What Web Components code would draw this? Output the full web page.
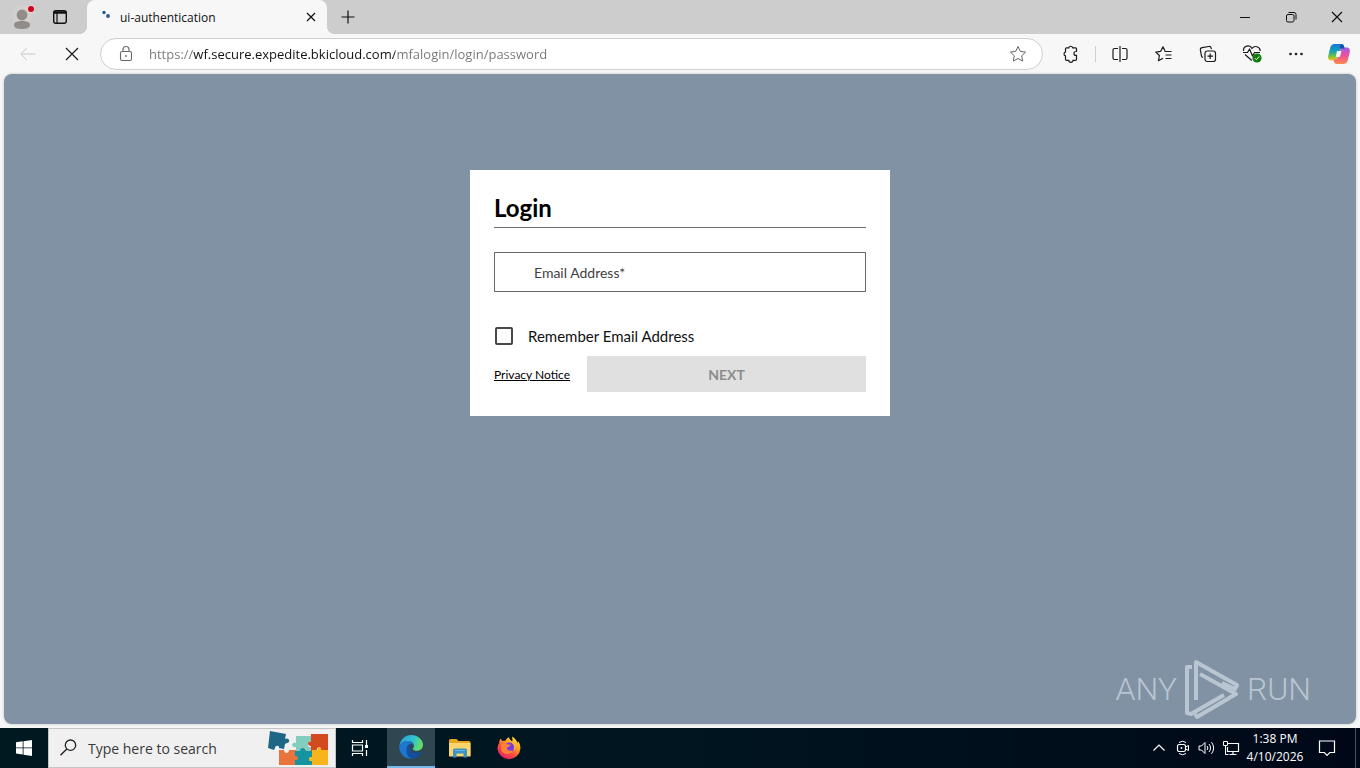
<!DOCTYPE html>
<html lang="en">
<head>
<meta charset="utf-8">
<title>ui-authentication</title>
<style>
html, body { margin: 0; height: 100%; }
body { font-family: "Open Sans", "Noto Sans", sans-serif; color: #1b1b1b; overflow: hidden; }
</style>
</head>
<body>
<desktop-shell></desktop-shell>
<script>
const RESET = `
  *, *::before, *::after { box-sizing: border-box; }
  button { font: inherit; color: inherit; background: none; border: 0; padding: 0; margin: 0; display: flex; align-items: center; justify-content: center; }
  input { font: inherit; color: inherit; margin: 0; }
`;
function define(name, css, html, setup) {
  const template = document.createElement('template');
  template.innerHTML = `<style>${RESET}${css}</style>${html}`;
  customElements.define(name, class extends HTMLElement {
    constructor() {
      super();
      this.attachShadow({ mode: 'open' }).append(template.content.cloneNode(true));
    }
    connectedCallback() { if (setup) setup(this, this.shadowRoot); }
  });
}

/* name: [width, height, markup] */
const line = 'fill="none" stroke="currentColor"';
const ICONS = {
  avatar: [24, 26, `<circle cx="12" cy="11" r="10" fill="#d3d0ce"/><circle cx="12" cy="11" r="5.400" fill="#8f8c89"/><path d="M4 21c0-3 3.500-4 8-4s8 1 8 4-3.500 4-8 4-8-1-8-4z" fill="#8f8c89"/><circle cx="21" cy="5" r="3.800" fill="#e3d6d6"/><circle cx="21" cy="5" r="3" fill="#d0021b"/>`],
  workspace: [16, 16, `<rect x="1.700" y="1.700" width="12.600" height="12.600" rx="2.200" ${line} stroke-width="1.400"/><path d="M1.700 4h12.600M1.700 3h12.600" ${line} stroke-width="1.400"/><path d="M5 4v10.300" ${line} stroke-width="1.200"/>`],
  spinner: [16, 16, `<circle cx="6" cy="3.500" r="1.700" fill="#1f5c96"/><circle cx="10" cy="7" r="1.900" fill="#1f5c96"/>`],
  closeSmall: [10, 10, `<path d="M1 1l8 8M9 1L1 9" ${line} stroke-width="1.200"/>`],
  plus: [14, 14, `<path d="M7 .5v13M.5 7h13" ${line} stroke-width="1.200"/>`],
  minimize: [12, 12, `<path d="M1 6.500h10" ${line}/>`],
  restore: [12, 12, `<rect x="1.500" y="3.500" width="7.500" height="7.500" rx="1.500" ${line}/><path d="M3.500 1.500h5.500a2 2 0 0 1 2 2v5" ${line}/>`],
  close: [12, 12, `<path d="M1 1l10 10M11 1L1 11" ${line} stroke-width="1.200"/>`],
  back: [18, 16, `<path d="M16.500 8H2M8 1.800L1.800 8 8 14.200" ${line}/>`],
  stop: [14, 14, `<path d="M1 1l12 12M13 1L1 13" ${line} stroke-width="1.200"/>`],
  lock: [16, 18, `<rect x="2.500" y="6.500" width="11" height="9" rx="1.800" ${line} stroke-width="1.100"/><path d="M5 6.500V4.500a3 3 0 0 1 6 0v2" ${line} stroke-width="1.100"/><circle cx="8" cy="11" r=".9" fill="currentColor"/>`],
  star: [18, 18, `<path d="M9 1.500l2.300 4.900 5.300.7-3.900 3.700 1 5.300L9 13.500l-4.700 2.600 1-5.300L1.400 7.100l5.300-.7z" ${line} stroke-linejoin="round"/>`],
  puzzle: [18, 18, `<path d="M4.500 2.800h2.300a2 2 0 0 1 3.900 0h2.800a1 1 0 0 1 1 1v2.700h-.6a1.900 1.900 0 0 0 0 3.900h.6v3.900a1 1 0 0 1-1 1H11a2 2 0 0 1-4.200 0H4.500a1 1 0 0 1-1-1v-3.400a2.100 2.100 0 0 1 0-4V3.800a1 1 0 0 1 1-1z" ${line} stroke-width="1.200"/>`],
  split: [18, 18, `<path d="M9 1v16M7 3.500H3.500a1.500 1.500 0 0 0-1.500 1.500v8a1.500 1.500 0 0 0 1.500 1.500H7M11 3.500h3.500A1.500 1.500 0 0 1 16 5v8a1.500 1.500 0 0 1-1.500 1.500H11" ${line} stroke-width="1.200"/>`],
  favorites: [18, 18, `<path d="M11.500 6.500h-1.300L8 1.800 5.700 6.300l-4.900.8 3.600 3.400-.9 5.200L8 13.300M11.500 6.500h5M10.500 10h6M10.500 13.500h6" ${line} stroke-width="1.200" stroke-linejoin="round"/>`],
  collections: [18, 18, `<rect x="6" y="6" width="10.500" height="10.500" rx="2.200" ${line} stroke-width="1.200"/><path d="M11.200 8.500v5.500M8.500 11.200H14M4 12.500A2.500 2.500 0 0 1 2.500 11L1.400 5.200a2.200 2.200 0 0 1 1.800-2.500l6.500-1.200a2.200 2.200 0 0 1 2.500 1.700l.2.900" ${line} stroke-width="1.200"/>`],
  health: [20, 20, `<path d="M1.500 7A4.500 4.500 0 0 1 10 4.500 4.500 4.500 0 0 1 18.200 7M3 10.500l6.800 6M1 8.500h4.500L7.500 5l3 7 2-3.500H18" ${line} stroke-width="1.200" stroke-linejoin="round"/><circle cx="15" cy="14" r="4.600" fill="#107c10"/><path d="M12.800 14.200l1.500 1.500 3-3.200" fill="none" stroke="#fff"/>`],
  dots: [16, 16, `<circle cx="2.500" cy="8" r="1.300" fill="currentColor"/><circle cx="8" cy="8" r="1.300" fill="currentColor"/><circle cx="13.500" cy="8" r="1.300" fill="currentColor"/>`],
  copilot: [24, 24, `<defs><linearGradient id="a" x1="0" y1="0" x2="0" y2="1"><stop offset="0" stop-color="#1776d5"/><stop offset=".45" stop-color="#16a3b8"/><stop offset=".75" stop-color="#78c23c"/><stop offset="1" stop-color="#ffc21a"/></linearGradient><linearGradient id="b" x1="0" y1="0" x2="0" y2="1"><stop offset="0" stop-color="#a35ae8"/><stop offset=".5" stop-color="#ed4f9b"/><stop offset="1" stop-color="#ff8a4a"/></linearGradient></defs><path d="M7.500 2h6.700c1.900 0 2.400 1.200 3 3l.4 1.500h-2.200c-1.300 0-2 .7-2.400 2l-2.200 7c-.7 2.200-1.700 3-3.500 3H4.500C1.800 18.500.5 16.500 1.300 13.500l2-8C4 3.200 5.300 2 7.500 2z" fill="url(#a)"/><path d="M16.500 22H9.800c-1.900 0-2.400-1.200-3-3l-.4-1.500h2.200c1.300 0 2-.7 2.400-2l2.200-7c.7-2.200 1.700-3 3.500-3h2.800c2.700 0 4 2 3.200 5l-2 8C20 20.800 18.700 22 16.500 22z" fill="url(#b)"/><path d="M14.200 2c1.900 0 2.400 1.200 3 3l.4 1.500h-3c-1 0-1.700-.7-2-1.500z" fill="#154fad"/><path d="M10 9h4.500l-1.600 6H8.700z" fill="#f7f7f7"/>`],
  windows: [16, 16, `<path d="M0 2.200l6.700-.9v6.200H0zM7.500 1.200L16 0v7.500H7.500zM0 8.300h6.700v6.200L0 13.600zM7.500 8.300H16V16l-8.500-1.200z" fill="#fff"/>`],
  search: [18, 18, `<circle cx="10.500" cy="6.200" r="5.200" ${line} stroke-width="1.300"/><path d="M6.800 9.900L.5 16.200" ${line} stroke-width="1.400"/>`],
  taskview: [18, 18, `<path d="M1.500 1v2.500h10V1M1.500 17v-2.500h10V17M1.500 6h10v6h-10zM15.500 1v5M15.500 11v6" ${line} stroke-width="1.200"/><rect x="14" y="6" width="3" height="3" fill="#fff"/>`],
  edge: [24, 24, `<defs><linearGradient id="a" x1="0" y1=".2" x2="1" y2=".5"><stop offset="0" stop-color="#2b9be0"/><stop offset=".55" stop-color="#2fc3d0"/><stop offset="1" stop-color="#66df60"/></linearGradient><linearGradient id="b" x1="0" y1="0" x2=".7" y2="1"><stop offset="0" stop-color="#2187d8"/><stop offset="1" stop-color="#1452a5"/></linearGradient></defs><path d="M.4 11C1.300 4.600 6 0 12.200 0 18.700 0 24 4.600 24 9.800c0 3.700-2.800 6-6 6-2.700 0-4.200-.9-4.200-1.900 0-.8 1.100-1.400 1.100-3.200 0-2.500-2.600-4.600-6-4.600C5 6.100 1.800 7.900.4 11z" fill="url(#a)"/><path d="M.3 12C.5 8.600 4.200 6.100 8.500 6.100c3.500 0 6.300 2 6.400 4.500-.9-1-2-1.600-3.200-1.600-2.600 0-4 2.400-3.500 5.200.8 4 4.500 7.300 8.300 7.300A12 12 0 0 1 .3 12z" fill="url(#b)"/><path d="M8.200 14.200c-.5-2.800.9-5.200 3.500-5.200-2 2.500-.6 8.800 5.300 8.800 2.200 0 3.800-.6 5-1.300.5-.3.800.1.500.6A12 12 0 0 1 12.500 24C9 23.200 7.500 18.500 8.200 14.200z" fill="#134f9e"/><path d="M.3 12c.2 6 4 11.300 12.200 12-4-2.200-5.800-6-5.600-10C7.100 11 8.800 9.100 11.300 9 7 7.500 2 8.500.3 12z" fill="#1b78ce"/>`],
  explorer: [22, 20, `<path d="M0 2.500a1.500 1.500 0 0 1 1.500-1.500h6l2 2H20a1.500 1.500 0 0 1 1.500 1.500V18H0z" fill="#e8a622"/><path d="M0 5h21.500v13.500H0z" fill="#fad56b"/><path d="M4 19.500V12a1.500 1.500 0 0 1 1.500-1.500h11A1.500 1.500 0 0 1 18 12v7.500h-3.500V15.500h-7v4z" fill="#3c91c8"/><path d="M6 12.500h10" stroke="#67b4df"/>`],
  firefox: [24, 24, `<defs><linearGradient id="a" x1=".9" y1="0" x2=".2" y2="1"><stop offset="0" stop-color="#fff044"/><stop offset=".35" stop-color="#ffa424"/><stop offset=".65" stop-color="#ff4a3f"/><stop offset="1" stop-color="#d91b78"/></linearGradient></defs><path d="M4 2.500c.2 1 .7 2 1.400 2.600 1-.4 2-.5 3-.4C9.300 3.100 10.400 2 12 1.300c.2 2 1.700 2.800 3.200 4.300.4-1.600.2-3.400-.2-5.100 3 1.500 4.700 4 5.700 6.500.2-.5.300-1.200.2-1.900 2 2.500 2.500 5 2.500 7.400A11.500 11.500 0 0 1 .5 13c0-2.500.6-4.200 1.700-6-.2-1.600.4-3.300 1.800-4.500z" fill="url(#a)"/><circle cx="12.500" cy="11.500" r="5" fill="#7a3ce0"/><path d="M4 8c2.800-1.600 4.800-.4 6 .2 1.500.7 3 .1 3.700.8-.3 1.500-3.700 1.500-4 3 .3 2.500 3.600 3.500 6.300 2.300-1.500 4.500-8.500 5.300-11.500.7z" fill="#ff8435"/><path d="M15 6c2.800 2 3.500 5 2.300 8" fill="none" stroke="#ffb637" stroke-width="1.500"/>`],
  chevron: [14, 14, `<path d="M1.500 9.500L7 4l5.500 5.500" ${line} stroke-width="1.200"/>`],
  meet: [14, 16, `<rect x="1.500" y="4.500" width="8" height="7" rx="1.800" ${line} stroke-width="1.200"/><path d="M9.500 7l3-1.500v5l-3-1.500M3 2.500a6 6 0 0 1 7 0M3 13.500a6 6 0 0 0 7 0" ${line}/><circle cx="5.500" cy="8" r=".9" fill="#fff"/>`],
  sound: [18, 16, `<path d="M1 6h2.500L7 2.500v11L3.500 10H1z" ${line}/><path d="M9 6a3 3 0 0 1 0 4M11 4a6 6 0 0 1 0 8M13.500 2.200a9 9 0 0 1 0 11.600" ${line}/>`],
  network: [18, 16, `<path d="M6 3.500h10.500v8H5.500V7M7.500 14.500h7M11 11.500v3" ${line} stroke-width="1.200"/><path d="M1.500 1.500h4v4h-4zM3.500 5.500v9h3" ${line}/>`],
  notice: [18, 18, `<path d="M1.500 2h15v11.500h-4.700L9 16.300l-2.700-2.800H1.500z" ${line} stroke-width="1.200"/>`],
  jigsaw: [64, 36, `<path d="M4 1l16 3-1 5c4-2.500 6 3.500 2 4l-2 1-1 5-5-1c1-3-4-3-4 0l-1 2-6-2z" fill="#1d6685"/><path d="M30 6h15v7c-4-1-4 5 0 4v4h-5c1-4-5-4-4 0h-6v-4c-5 1-5-6 0-4z" fill="#82cdbd"/><path d="M45 4h17v17h-7c1-5-5-5-4 0h-6v-5c-4 0-4-5 0-4z" fill="#d44a20"/><path d="M13 20h5c0 4 5 4 5 0h7v6c4-1 4 5 0 4v5H13z" fill="#e9743b"/><path d="M29 21h5c0-4 6-4 6 0h6v6c-4-1-4 5 0 4v4H29v-5c4 1 4-5 0-4z" fill="#1593a0"/><path d="M46 20h6c-1-4 4-4 3 0h7v15H46v-4c-4 1-4-5 0-4z" fill="#f7b51b"/>`],
  anyrun: [56, 62, `<g fill="none" stroke="currentColor" stroke-width="4" stroke-linejoin="round"><path d="M8 9H3v46l4 1L40 37"/><path d="M12 42V4l41 23-2 4-13-6"/><path d="M16 16l36 20-39 23-2-3"/></g>`],
};
customElements.define('ui-icon', class extends HTMLElement {
  connectedCallback() {
    const [w, h, body] = ICONS[this.getAttribute('name')];
    const root = this.shadowRoot || this.attachShadow({ mode: 'open' });
    root.innerHTML = `<style>:host{display:inline-flex;flex:none}svg{display:block}</style><svg width="${w}" height="${h}" viewBox="0 0 ${w} ${h}" aria-hidden="true">${body}</svg>`;
  }
});

define('icon-button', `
  :host { display: flex; flex: none; width: 44px; height: 100%; }
  button { width: 100%; height: 100%; }
`, `<button type="button"><slot></slot></button>`, (host, root) => {
  root.querySelector('button').setAttribute('aria-label', host.getAttribute('label'));
  if (host.hasAttribute('disabled')) root.querySelector('button').disabled = true;
});

define('tab-strip', `
  :host { display: flex; height: 34px; background: #cdcdcd; color: #111; }
  .profile { width: 44px; }
  .spaces { width: 32px; margin-right: 11px; }
  .tab { position: relative; display: flex; align-items: center; width: 240px; padding: 0 8px 0 11px; background: #f7f7f7; border-radius: 8px 8px 0 0; font-size: 12px; }
  .tab::before, .tab::after { content: ""; position: absolute; bottom: 0; width: 8px; height: 8px; }
  .tab::before { left: -8px; background: radial-gradient(circle at 0 0, transparent 8px, #f7f7f7 8px); }
  .tab::after { right: -8px; background: radial-gradient(circle at 100% 0, transparent 8px, #f7f7f7 8px); }
  .title { flex: 1; margin-left: 6px; }
  .tab icon-button { width: 16px; }
  .new { width: 42px; }
  .window { display: flex; margin-left: auto; }
  .window icon-button { width: 46px; }
`, `
  <icon-button class="profile" label="Profile"><ui-icon name="avatar"></ui-icon></icon-button>
  <icon-button class="spaces" label="Tab actions"><ui-icon name="workspace"></ui-icon></icon-button>
  <div class="tab"><ui-icon name="spinner"></ui-icon><span class="title"><slot></slot></span>
    <icon-button label="Close tab"><ui-icon name="closeSmall"></ui-icon></icon-button></div>
  <icon-button class="new" label="New tab"><ui-icon name="plus"></ui-icon></icon-button>
  <div class="window">
    <icon-button label="Minimize"><ui-icon name="minimize"></ui-icon></icon-button>
    <icon-button label="Restore"><ui-icon name="restore"></ui-icon></icon-button>
    <icon-button label="Close"><ui-icon name="close"></ui-icon></icon-button>
  </div>`);

define('address-bar', `
  :host { display: flex; align-items: center; height: 32px; border: 1px solid #cfcfcf; border-radius: 16px; background: #fff; color: #666; padding: 0 15px 0 17px; }
  input { flex: 1; min-width: 0; height: 28px; margin-left: 15px; padding: 0; border: 0; outline: 0; font-size: 13px; color: #707070;
    background: linear-gradient(90deg, #767676 44px, #111 44px 246px, #767676 246px); -webkit-background-clip: text; background-clip: text; -webkit-text-fill-color: transparent; }
`, `<ui-icon name="lock"></ui-icon>
  <input type="text" aria-label="Address" spellcheck="false" value="https://wf.secure.expedite.bkicloud.com/mfalogin/login/password">
  <ui-icon name="star"></ui-icon>`);

define('browser-toolbar', `
  :host { display: flex; align-items: center; height: 40px; padding-left: 6px; background: #f7f7f7; color: #1b1b1b; }
  .back { color: #c8c8c8; }
  address-bar { flex: 1; margin: 0 6px; }
  .rule { width: 1px; height: 16px; margin: 0 2px; background: #cfcfcf; }
  .copilot { width: 42px; }
`, `
  <icon-button class="back" label="Back" disabled><ui-icon name="back"></ui-icon></icon-button>
  <icon-button label="Stop"><ui-icon name="stop"></ui-icon></icon-button>
  <address-bar></address-bar>
  <icon-button label="Extensions"><ui-icon name="puzzle"></ui-icon></icon-button>
  <span class="rule"></span>
  <icon-button label="Split screen"><ui-icon name="split"></ui-icon></icon-button>
  <icon-button label="Favorites"><ui-icon name="favorites"></ui-icon></icon-button>
  <icon-button label="Collections"><ui-icon name="collections"></ui-icon></icon-button>
  <icon-button label="Browser essentials"><ui-icon name="health"></ui-icon></icon-button>
  <icon-button label="Settings and more"><ui-icon name="dots"></ui-icon></icon-button>
  <icon-button class="copilot" label="Copilot"><ui-icon name="copilot"></ui-icon></icon-button>`);

define('login-card', `
  :host { display: block; width: 100%; max-width: 420px; padding: 24px; background: #fff; color: #111; font-family: Lato, Inter, sans-serif; }
  form { display: block; margin: 0; }
  h1 { margin: 0 0 24px; padding-bottom: 5px; border-bottom: 1px solid #6f6f6f; font-size: 24px; line-height: 28px; font-weight: 700; color: #000; }
  .field { display: grid; height: 40px; align-items: center; font-size: 14px; }
  .field > * { grid-area: 1 / 1; }
  .field input { width: 100%; height: 100%; padding: 0 40px; border: 1px solid #6a6a6a; border-radius: 0; background: #fff; }
  .field label { padding-left: 40px; color: #3f3f3f; pointer-events: none; }
  .field input:focus + label, .field input:valid + label { visibility: hidden; }
  .remember { display: flex; align-items: center; gap: 15px; height: 40px; margin-top: 24px; font-size: 15px; }
  .remember input { appearance: none; width: 18px; height: 18px; margin-left: 1px; border: 2px solid #484848; border-radius: 2px; background: #fff; }
  .remember input:checked { background: #484848; }
  .actions { display: grid; grid-template-columns: 1fr 3fr; align-items: center; }
  a { color: #000; font-size: 12px; white-space: nowrap; }
  .actions button { height: 36px; background: #e0e0e0; color: #8d8d8d; font-size: 14px; font-weight: 700; }
`, `
  <form>
    <h1>Login</h1>
    <div class="field"><input id="email" type="text" required><label for="email">Email Address*</label></div>
    <div class="remember"><input id="remember" type="checkbox"><label for="remember">Remember Email Address</label></div>
    <div class="actions"><a href="#privacy">Privacy Notice</a><button type="submit" disabled>NEXT</button></div>
  </form>`);

define('any-run-mark', `
  :host { display: flex; align-items: center; gap: 7px; color: #b9c5d0; font: 300 32px/62px Roboto, sans-serif; }
`, `<span>ANY</span><ui-icon name="anyrun"></ui-icon><span>RUN</span>`);

define('web-view', `
  :host { position: relative; display: flex; justify-content: center; align-items: flex-start; padding-top: 96px; border-radius: 8px; background: #8092a3; box-shadow: 0 0 3px #b8bdc4; }
  any-run-mark { position: absolute; right: 45px; bottom: 4px; }
`, `<slot></slot><any-run-mark></any-run-mark>`);

define('task-search', `
  :host { display: flex; align-items: center; width: 288px; height: 40px; padding: 0 5px 0 11px; background: #f0f0f0; border: 1px solid #c4c4c4; color: #222; }
  label { display: flex; }
  input { flex: 1; min-width: 0; height: 36px; margin-left: 10px; padding: 0; border: 0; outline: 0; background: none; font-size: 14px; }
  input::placeholder { color: #3a3a3a; opacity: 1; }
`, `<label for="q" aria-label="Search"><ui-icon name="search"></ui-icon></label><input id="q" type="text" placeholder="Type here to search"><ui-icon name="jigsaw"></ui-icon>`);

define('task-bar', `
  :host { display: flex; height: 40px; background: linear-gradient(90deg, #001820, #001520 50%, #000818); color: #fff; }
  .app { width: 48px; }
  .view { margin-right: 3px; }
  .active { margin-right: 1px; background: #304650; border-bottom: 2px solid #76b9ed; }
  .last { margin-left: 1px; }
  .tray { display: flex; margin-left: auto; }
  .tray icon-button { width: 24px; }
  .clock { display: flex; flex-direction: column; align-items: center; justify-content: center; width: 56px; margin-left: 4px; font-size: 12px; line-height: 18px; white-space: nowrap; }
  .tray .notice { width: 48px; margin-right: 4px; border: 0; }
  .edge { width: 5px; border-left: 1px solid #4b5261; }
`, `
  <icon-button class="app" label="Start"><ui-icon name="windows"></ui-icon></icon-button>
  <task-search></task-search>
  <icon-button class="app view" label="Task view"><ui-icon name="taskview"></ui-icon></icon-button>
  <icon-button class="app active" label="Microsoft Edge"><ui-icon name="edge"></ui-icon></icon-button>
  <icon-button class="app" label="File Explorer"><ui-icon name="explorer"></ui-icon></icon-button>
  <icon-button class="app last" label="Firefox"><ui-icon name="firefox"></ui-icon></icon-button>
  <div class="tray">
    <icon-button label="Show hidden icons"><ui-icon name="chevron"></ui-icon></icon-button>
    <icon-button label="Meet Now"><ui-icon name="meet"></ui-icon></icon-button>
    <icon-button label="Volume"><ui-icon name="sound"></ui-icon></icon-button>
    <icon-button label="Network"><ui-icon name="network"></ui-icon></icon-button>
    <div class="clock"><span>1:38 PM</span><span>4/10/2026</span></div>
    <icon-button class="notice" label="Notifications"><ui-icon name="notice"></ui-icon></icon-button>
    <span class="edge"></span>
  </div>`);

define('desktop-shell', `
  :host { display: flex; flex-direction: column; height: 100vh; background: #f7f7f7; }
  tab-strip, browser-toolbar, task-bar { flex: none; }
  web-view { flex: 1; min-height: 0; margin: 0 4px 4px; }
`, `
  <tab-strip>ui-authentication</tab-strip>
  <browser-toolbar></browser-toolbar>
  <web-view><login-card></login-card></web-view>
  <task-bar></task-bar>`);
</script>
</body>
</html>
